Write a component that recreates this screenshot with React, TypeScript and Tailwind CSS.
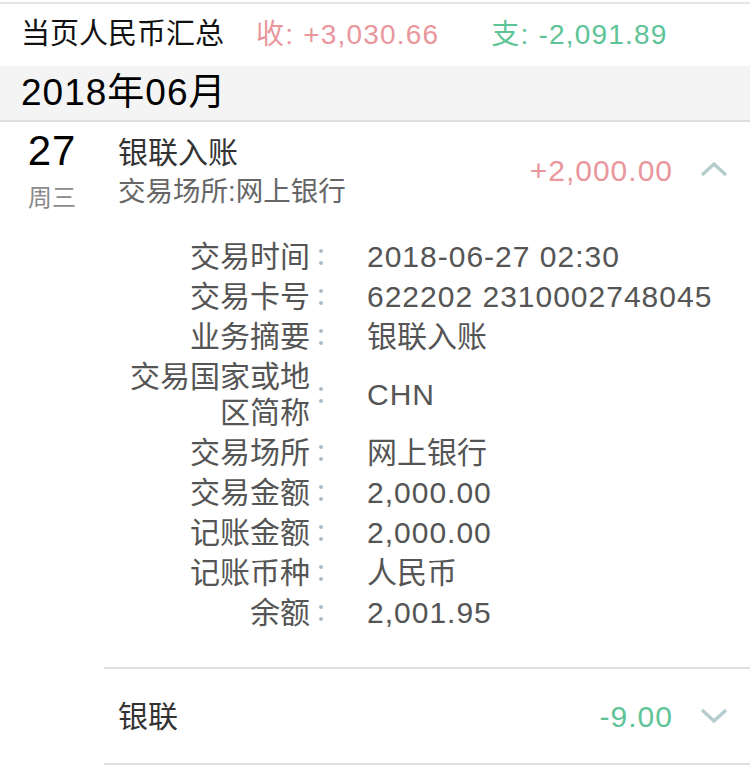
const FONT = '"Liberation Sans", "Noto Sans CJK SC", sans-serif';

const details: { label: string; value: string; num?: boolean }[] = [
  { label: '交易时间', value: '2018-06-27 02:30', num: true },
  { label: '交易卡号', value: '622202 2310002748045', num: true },
  { label: '业务摘要', value: '银联入账' },
  { label: '交易国家或地区简称', value: 'CHN', num: true },
  { label: '交易场所', value: '网上银行' },
  { label: '交易金额', value: '2,000.00', num: true },
  { label: '记账金额', value: '2,000.00', num: true },
  { label: '记账币种', value: '人民币' },
  { label: '余额', value: '2,001.95', num: true },
];

function Chevron({ up }: { up?: boolean }) {
  return (
    <svg width="28" height="16" viewBox="0 0 28 16" className="shrink-0">
      <path
        d={up ? 'M2 14 L14 3 L26 14' : 'M2 2 L14 13 L26 2'}
        fill="none"
        stroke="#b6cdcf"
        strokeWidth="3.5"
      />
    </svg>
  );
}

function Colon() {
  return (
    <div className="flex flex-col items-center justify-center gap-[8px] w-[10px]">
      <span className="block w-[4px] h-[4px] rounded-full bg-[#a9bcc3]" />
      <span className="block w-[4px] h-[4px] rounded-full bg-[#a9bcc3]" />
    </div>
  );
}

export default function App() {
  return (
    <div className="w-[750px] h-[774px] bg-white overflow-hidden" style={{ fontFamily: FONT }}>
      <div className="h-[2px] bg-white" />
      <div className="h-[2px] bg-[#e6e6e6]" />

      {/* summary */}
      <div className="h-[62px] flex items-center pl-[21px]">
        <span className="text-[29px] text-[#111]">当页人民币汇总</span>
        <span className="ml-[32px] text-[28px] text-[#e9979c] tracking-[1.2px]">收: +3,030.66</span>
        <span className="ml-[52px] text-[28px] text-[#5ec497] tracking-[1.2px]">支: -2,091.89</span>
      </div>

      {/* month */}
      <div className="h-[54px] flex items-center pl-[21px] bg-[#f4f4f4] border-b-2 border-[#dedede] box-content">
        <span className="text-[37px] text-black tracking-[1px]">2018年06月</span>
      </div>

      {/* expanded entry */}
      <div className="flex">
        <div className="w-[104px] shrink-0 flex flex-col items-center pt-[4px]">
          <span className="text-[42px] leading-[50px] text-black tracking-[1px]">27</span>
          <span className="text-[24px] leading-[40px] mt-[2px] text-[#8a8a8a]">周三</span>
        </div>
        <div className="flex-1">
          <div className="flex items-center pr-[22px] pt-[12px]">
            <div className="flex-1 pl-[14px]">
              <div className="text-[30px] leading-[38px] text-[#333]">银联入账</div>
              <div className="text-[27.5px] leading-[40px] text-[#666]">交易场所:网上银行</div>
            </div>
            <span className="mb-[6px] text-[30px] text-[#e9979c] tracking-[1px] mr-[27px]">+2,000.00</span>
            <div className="mb-[8px]">
              <Chevron up />
            </div>
          </div>

          <div className="pt-[25px] pb-[34px] pl-[14px]">
            {details.map((d) => (
              <div key={d.label} className="flex items-stretch py-[2px]">
                <div className="w-[192px] shrink-0 text-right text-[30px] leading-[36px] text-[#555] break-all">
                  {d.label}
                </div>
                <div className="ml-[6px] flex">
                  <Colon />
                </div>
                <div
                  className={`ml-[41px] flex items-center text-[30px] leading-[36px] text-[#555] ${
                    d.num ? 'tracking-[1px]' : ''
                  }`}
                >
                  {d.value}
                </div>
              </div>
            ))}
          </div>

          <div className="h-[2px] bg-[#dedede]" />
          <div className="h-[94px] flex items-center pl-[14px] pr-[22px]">
            <span className="flex-1 text-[30px] text-[#333]">银联</span>
            <span className="text-[30px] text-[#5ec497] tracking-[1px] mr-[27px]">-9.00</span>
            <Chevron />
          </div>
          <div className="h-[2px] bg-[#dedede]" />
        </div>
      </div>
    </div>
  );
}
